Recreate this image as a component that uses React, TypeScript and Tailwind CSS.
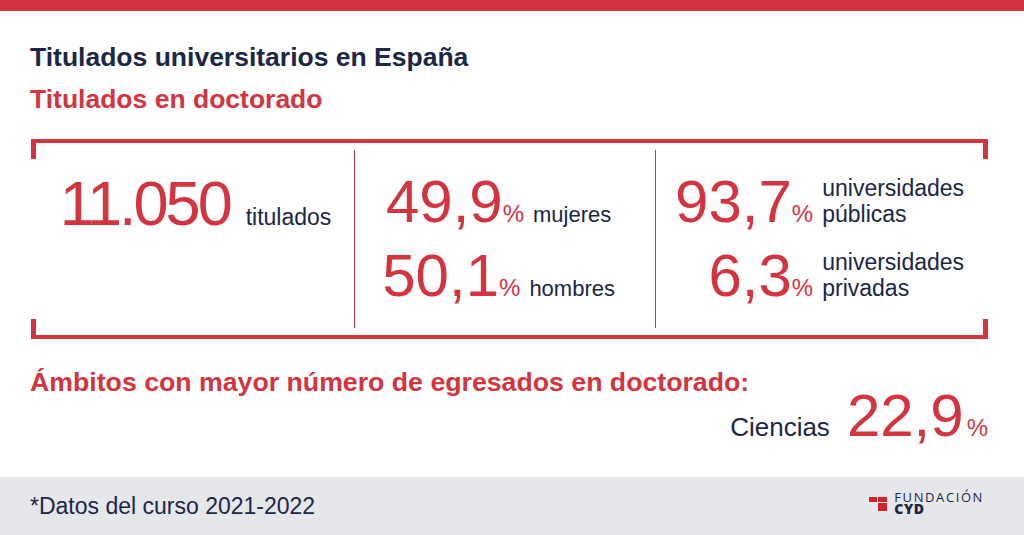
const RED = "bg-[#d3343f]";

function Stat({ value, label, wide }: { value: string; label: React.ReactNode; wide?: boolean }) {
  return (
    <div className="flex [align-items:last_baseline]">
      <span className="w-[118px] text-right text-[60px] leading-none text-[#d3343f]">{value}</span>
      <span className="text-[24px] leading-none text-[#d3343f]">%</span>
      <span className={`ml-[9px] text-[#1c2645] ${wide ? "text-[23px] leading-[26px]" : "text-[22px] leading-none"}`}>{label}</span>
    </div>
  );
}

export default function App() {
  return (
    <div
      className="flex h-[535px] w-[1024px] flex-col overflow-hidden bg-white"
      style={{ fontFamily: '"Liberation Sans", Arial, sans-serif' }}
    >
      <div className={`h-[11px] ${RED}`} />

      <div className="flex flex-1 flex-col px-[30px]">
        <h1 className="mt-[33px] text-[26.5px] font-bold leading-[26px] text-[#1c2645]">Titulados universitarios en España</h1>
        <h2 className="mt-[16px] text-[26.5px] font-bold leading-[26px] text-[#d3343f]">Titulados en doctorado</h2>

        {/* bracket box */}
        <div className="relative ml-px mt-[27px] box-border h-[200px] w-[957px] border-y-[4px] border-[#d3343f]">
          <div className={`absolute -top-[4px] left-0 h-[20px] w-[5px] ${RED}`} />
          <div className={`absolute -top-[4px] right-0 h-[20px] w-[5px] ${RED}`} />
          <div className={`absolute -bottom-[4px] left-0 h-[20px] w-[5px] ${RED}`} />
          <div className={`absolute -bottom-[4px] right-0 h-[20px] w-[5px] ${RED}`} />

          <div className="flex h-full py-[7px]">
            <div className="flex w-[323px] justify-center pl-[6px] pt-[22px]">
              <div className="flex items-baseline">
                <span className="text-[63px] leading-none tracking-[-3px] text-[#d3343f]">11.050</span>
                <span className="ml-[16px] text-[23px] leading-none text-[#1c2645]">titulados</span>
              </div>
            </div>

            <div className="w-px bg-[#d3343f]" />
            <div className="flex w-[300px] flex-col items-center gap-[14px] pr-[14px] pt-[22px]">
              <Stat value="49,9" label="mujeres" />
              <Stat value="50,1" label="hombres" />
            </div>

            <div className="w-px bg-[#d3343f]" />
            <div className="flex flex-1 flex-col items-center gap-[14px] pr-[6px] pt-[22px]">
              <Stat value="93,7" label={<>universidades<br />públicas</>} wide />
              <Stat value="6,3" label={<>universidades<br />privadas</>} wide />
            </div>
          </div>
        </div>

        <h3 className="mt-[30px] text-[26.7px] font-bold leading-[27px] text-[#d3343f]">
          Ámbitos con mayor número de egresados en doctorado:
        </h3>
        <div className="-mt-[10px] flex items-baseline justify-end pr-[6px]">
          <span className="text-[26px] leading-none text-[#1c2645]">Ciencias</span>
          <span className="ml-[17px] text-[60px] leading-none text-[#d3343f]">22,9</span>
          <span className="ml-[3px] text-[24px] leading-none text-[#d3343f]">%</span>
        </div>
      </div>

      <footer className="flex h-[58px] items-center justify-between bg-[#e6e7eb] pl-[30px] pr-[40px]">
        <span className="text-[23px] leading-none text-[#1c2645]">*Datos del curso 2021-2022</span>
        <div className="-mt-[5px] flex items-start gap-[7px]">
          <svg className="mt-[5px]" width="18" height="14" viewBox="0 0 18 14">
            <rect x="0" y="0" width="8" height="5" fill="#d3202a" />
            <rect x="9" y="0" width="9" height="5" fill="#d3202a" />
            <rect x="9" y="6" width="9" height="8" fill="#d3202a" />
          </svg>
          <div className="flex flex-col text-[#1c2645]" style={{ fontFamily: '"Open Sans", sans-serif' }}>
            <span className="text-[13px] font-normal leading-[11px] tracking-[1.6px]">FUNDACIÓN</span>
            <span className="text-[14px] font-extrabold leading-[12px] tracking-[0.6px]">CYD</span>
          </div>
        </div>
      </footer>
    </div>
  );
}
